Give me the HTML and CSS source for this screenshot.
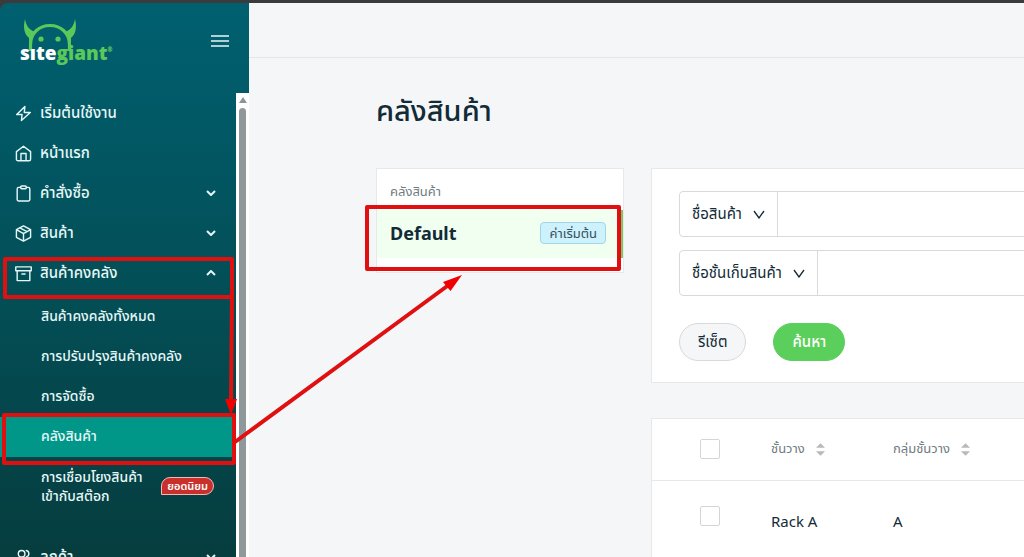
FILE: index.html
```
<!DOCTYPE html>
<html lang="th">
<head>
    <meta charset="UTF-8">
    <meta name="viewport" content="width=device-width, initial-scale=1.0">
    <title>คลังสินค้า</title>
    <link rel="stylesheet" href="styles.css">
</head>
<body>
    <div class="app">
        <aside class="sidebar">
            <div class="sidebar-header">
                <a href="#" class="logo" aria-label="sitegiant">
                    <svg class="logo-horns" width="54" height="32" viewBox="0 0 54 32">
                        <path d="M2 0C0 8 1 15 6 19L6 25L13 13C7 12 3 7 2 0ZM52 0C54 8 53 15 48 19L48 25L41 13C47 12 51 7 52 0Z" fill="#5bc85a"/>
                        <path d="M7.500 32V26C7.500 14 16 6.500 27 6.500S46.500 14 46.500 26V32" fill="none" stroke="#5bc85a" stroke-width="3.200"/>
                        <circle cx="18" cy="20" r="2.600" fill="#5bc85a"/>
                        <circle cx="35" cy="20" r="2.600" fill="#5bc85a"/>
                    </svg>
                    <span class="logo-text">sıte<b>giant</b><sup>®</sup></span>
                </a>
                <button type="button" class="menu-toggle" aria-label="เมนู">
                    <svg width="18" height="14" viewBox="0 0 18 14" stroke="currentColor" stroke-width="1.500"><path d="M0 2h18M0 7h18M0 12h18"/></svg>
                </button>
            </div>
            <div class="sidebar-body">
                <nav class="nav">
                    <a href="#" class="nav-item">
                        <svg class="icon" viewBox="0 0 18 18"><path d="M10.500 1.500 1.800 10h5.700L6.800 16.500 16.200 8h-6.400z"/></svg>
                        <span>เริ่มต้นใช้งาน</span>
                    </a>
                    <a href="#" class="nav-item">
                        <svg class="icon" viewBox="0 0 18 18"><path d="M1.500 7 9 1.300 16.500 7v8a1.700 1.700 0 0 1-1.700 1.700H3.200A1.700 1.700 0 0 1 1.500 15zM6.300 16.500V9h5.400v7.500"/></svg>
                        <span>หน้าแรก</span>
                    </a>
                    <a href="#" class="nav-item">
                        <svg class="icon" viewBox="0 0 18 18"><path d="M6 2.500H4A1.700 1.700 0 0 0 2.300 4.200v11A1.700 1.700 0 0 0 4 17h10a1.700 1.700 0 0 0 1.700-1.800v-11A1.700 1.700 0 0 0 14 2.500h-2"/><rect x="6" y="1" width="6" height="3" rx="1"/></svg>
                        <span>คำสั่งซื้อ</span>
                        <svg class="caret" viewBox="0 0 10 6"><path d="m1 1 4 4 4-4"/></svg>
                    </a>
                    <a href="#" class="nav-item">
                        <svg class="icon" viewBox="0 0 18 18"><path d="M9 1 16.500 5v8L9 17 1.500 13V5zM1.500 5 9 9l7.500-4M9 9v8M5.200 3l7.500 4"/></svg>
                        <span>สินค้า</span>
                        <svg class="caret" viewBox="0 0 10 6"><path d="m1 1 4 4 4-4"/></svg>
                    </a>
                    <a href="#" class="nav-item">
                        <svg class="icon" viewBox="0 0 18 18"><path d="M.8 2h16.400v4H.8zM2.300 6v10.500h13.400V6M7.300 9.500h3.400"/></svg>
                        <span>สินค้าคงคลัง</span>
                        <svg class="caret" viewBox="0 0 10 6"><path d="m1 5 4-4 4 4"/></svg>
                    </a>
                    <div class="subnav">
                        <a href="#" class="subnav-item">สินค้าคงคลังทั้งหมด</a>
                        <a href="#" class="subnav-item">การปรับปรุงสินค้าคงคลัง</a>
                        <a href="#" class="subnav-item">การจัดซื้อ</a>
                        <a href="#" class="subnav-item active">คลังสินค้า</a>
                        <a href="#" class="subnav-item two-line">
                            <span>การเชื่อมโยงสินค้า<br>เข้ากับสต๊อก</span>
                            <span class="hot">ยอดนิยม</span>
                        </a>
                    </div>
                    <a href="#" class="nav-item">
                        <svg class="icon" viewBox="0 0 18 18"><circle cx="7" cy="5" r="3.500"/><path d="M1 16v-2a3.500 3.500 0 0 1 3.500-3.500h5A3.500 3.500 0 0 1 13 14v2M12 1.600a3.500 3.500 0 0 1 0 6.800M14 10.700a3.500 3.500 0 0 1 3 3.300v2"/></svg>
                        <span>ลูกค้า</span>
                        <svg class="caret" viewBox="0 0 10 6"><path d="m1 1 4 4 4-4"/></svg>
                    </a>
                </nav>
                <div class="scrollbar">
                    <span class="scroll-up"></span>
                    <span class="scroll-thumb"></span>
                </div>
            </div>
        </aside>

        <div class="page">
            <header class="topbar"></header>
            <main class="content">
                <h1>คลังสินค้า</h1>
                <div class="columns">
                    <section class="card warehouses">
                        <h2>คลังสินค้า</h2>
                        <a href="#" class="warehouse">
                            <strong>Default</strong>
                            <span class="tag">ค่าเริ่มต้น</span>
                        </a>
                    </section>
                    <div class="details">
                        <form class="card filters">
                            <div class="field">
                                <select class="field-select" aria-label="ตัวกรองสินค้า">
                                    <option>ชื่อสินค้า</option>
                                </select>
                                <input type="text" aria-label="ชื่อสินค้า">
                            </div>
                            <div class="field">
                                <select class="field-select" aria-label="ตัวกรองชั้นเก็บ">
                                    <option>ชื่อชั้นเก็บสินค้า</option>
                                </select>
                                <input type="text" aria-label="ชื่อชั้นเก็บสินค้า">
                            </div>
                            <div class="buttons">
                                <button type="reset" class="btn">รีเซ็ต</button>
                                <button type="button" class="btn btn-primary">ค้นหา</button>
                            </div>
                        </form>
                        <div class="card">
                            <table class="racks">
                                <thead>
                                    <tr>
                                        <th class="check"><input type="checkbox" aria-label="เลือกทั้งหมด"></th>
                                        <th class="rack">ชั้นวาง <svg class="sort" viewBox="0 0 10 14"><path d="M5 0l5 5H0zM5 14l5-5H0z"/></svg></th>
                                        <th>กลุ่มชั้นวาง <svg class="sort" viewBox="0 0 10 14"><path d="M5 0l5 5H0zM5 14l5-5H0z"/></svg></th>
                                    </tr>
                                </thead>
                                <tbody>
                                    <tr>
                                        <td class="check"><input type="checkbox" aria-label="Rack A"></td>
                                        <td>Rack A</td>
                                        <td>A</td>
                                    </tr>
                                </tbody>
                            </table>
                        </div>
                    </div>
                </div>
            </main>
        </div>
    </div>

    <!-- walkthrough marks drawn over the page -->
    <svg class="marks" width="1024" height="557" viewBox="0 0 1024 557" aria-hidden="true">
        <g fill="none" stroke="#e01010" stroke-width="4" stroke-linejoin="round">
            <rect x="5" y="259" width="227" height="38"/>
            <rect x="4" y="415" width="230" height="48"/>
            <rect x="367" y="207" width="252" height="62"/>
            <path d="M232 296 231 404M235 442 450 284"/>
        </g>
        <path d="M225 399h12l-6 16zM462 275l-11.500 16-7.500-9z" fill="#f00000"/>
    </svg>
</body>
</html>
```

FILE: styles.css
```
* {
    box-sizing: border-box;
}
body {
    margin: 0;
    overflow: hidden;
    font-family: "Noto Sans", "Noto Sans Thai", "Open Sans", sans-serif;
    font-size: 15px;
    color: #122b36;
    background-color: #3b3b3b;
}
a {
    color: inherit;
    text-decoration: none;
}
button, input, select {
    font: inherit;
    color: inherit;
}
.app {
    display: flex;
    height: 100vh;
    padding-top: 3px;
}

/* sidebar */
.sidebar {
    flex: none;
    display: flex;
    flex-direction: column;
    width: 249px;
    border-top-left-radius: 8px;
    background: linear-gradient(#006070, #034f57 50%, #063d3f);
    color: #e6f7f7;
}
.sidebar-header {
    flex: none;
    display: flex;
    justify-content: space-between;
    align-items: flex-start;
    height: 90px;
    padding: 16px 20px 0;
}
.logo {
    display: flex;
    flex-direction: column;
}
.logo-horns {
    margin-left: 3px;
}
.logo-text {
    margin-top: -10px;
    font-family: "Open Sans", sans-serif;
    font-size: 19px;
    font-weight: 800;
    line-height: 24px;
    color: #fff;
}
.logo-text b {
    color: #5bc85a;
    font-weight: 800;
}
.logo-text sup {
    color: #5bc85a;
    font-size: 6px;
    vertical-align: 8px;
    line-height: 0;
}
.menu-toggle {
    display: flex;
    margin-top: 15px;
    padding: 0;
    border: none;
    background: none;
    cursor: pointer;
}
.sidebar-body {
    flex: 1;
    display: flex;
    min-height: 0;
}
.nav {
    flex: 1;
    overflow: hidden;
}
.nav-item {
    display: flex;
    align-items: center;
    gap: 8px;
    height: 40px;
    padding: 0 20px 0 15px;
    font-weight: 500;
}
.icon {
    width: 17px;
    height: 17px;
    fill: none;
    stroke: currentColor;
    stroke-width: 1.5;
    stroke-linejoin: round;
    stroke-linecap: round;
}
.caret {
    width: 10px;
    height: 6px;
    margin-left: auto;
    fill: none;
    stroke: currentColor;
    stroke-width: 2;
}
.subnav {
    padding: 4px 0 22px;
    font-size: 14px;
    font-weight: 500;
}
.subnav-item {
    display: flex;
    align-items: center;
    height: 40px;
    padding: 0 22px 2px 41px;
}
.subnav-item.active {
    background-color: #009688;
}
.subnav-item.two-line {
    justify-content: space-between;
    height: 58px;
    padding-bottom: 0;
    line-height: 19px;
    white-space: nowrap;
}
.hot {
    padding: 0 5px;
    border: 1px solid #f3b9b4;
    border-radius: 9px 9px 9px 0;
    background-color: #c9302c;
    color: #fff;
    font-size: 11px;
    font-weight: 600;
    line-height: 16px;
}
.scrollbar {
    display: flex;
    flex-direction: column;
    align-items: center;
    gap: 5px;
    width: 13px;
    padding-top: 4px;
    background-color: #fff;
}
.scroll-up {
    border: 4px solid transparent;
    border-top: none;
    border-bottom: 6px solid #8b9598;
}
.scroll-thumb {
    flex: 1;
    width: 7px;
    border-radius: 4px 4px 0 0;
    background-color: #8f999c;
}

/* page */
.page {
    flex: 1;
    min-width: 0;
    overflow: hidden;
    background-color: #f4f6f8;
}
.topbar {
    height: 55px;
    border-bottom: 1px solid #e3e6e8;
}
.content {
    padding: 32px 0 0 127px;
}
h1 {
    margin: 0;
    font-size: 29px;
    font-weight: 500;
    line-height: 40px;
}
.columns {
    display: grid;
    grid-template-columns: 248px minmax(640px, 1fr);
    align-items: start;
    gap: 27px;
    margin-top: 38px;
}
.card {
    border: 1px solid #e6e8ea;
    background-color: #fff;
}
.warehouses {
    padding-bottom: 14px;
}
.warehouses h2 {
    margin: 0;
    padding: 12px 13px 9px;
    color: #6f7b80;
    font-size: 13px;
    font-weight: 400;
    line-height: 20px;
}
.warehouse {
    display: flex;
    justify-content: space-between;
    align-items: center;
    height: 48px;
    padding: 0 13px 2px;
    border-right: 4px solid #7fc765;
    background-color: #f1fff1;
}
.warehouse strong {
    font-size: 18px;
}
.tag {
    padding: 0 8px;
    border: 1px solid #a3d5e8;
    border-radius: 4px;
    background-color: #cdf1fd;
    color: #34505a;
    font-size: 13px;
    line-height: 20px;
}
.details {
    display: flex;
    flex-direction: column;
    gap: 35px;
}
.filters {
    display: flex;
    flex-direction: column;
    gap: 13px;
    padding: 22px 27px 21px;
}
.field {
    display: flex;
    height: 46px;
    border: 1px solid #d6dadc;
    border-radius: 4px;
}
.field-select {
    padding: 0 35px 2px 12px;
    appearance: none;
    border: none;
    border-right: 1px solid #d6dadc;
    background: url("data:image/svg+xml,%3Csvg xmlns='http://www.w3.org/2000/svg' width='12' height='9' fill='none' stroke='%23122b36' stroke-width='1.3'%3E%3Cpath d='m1 1 5 7 5-7'/%3E%3C/svg%3E") no-repeat right 12px center;
}
.field input {
    flex: 1;
    min-width: 0;
    padding: 0 12px;
    border: none;
    background: none;
}
.buttons {
    display: flex;
    gap: 27px;
    margin-top: 14px;
}
.btn {
    height: 38px;
    padding: 0 18px;
    border: 1px solid #d6dadc;
    border-radius: 19px;
    background-color: #f4f6f8;
    cursor: pointer;
}
.btn-primary {
    border-color: #5bcf5b;
    background-color: #5bcf5b;
    color: #fff;
    font-weight: 500;
}
.racks {
    width: 100%;
    border-collapse: collapse;
    text-align: left;
}
.racks th {
    height: 61px;
    padding: 0;
    border-bottom: 1px solid #e6e8ea;
    color: #6f7b80;
    font-size: 13px;
    font-weight: 400;
}
.racks td {
    height: 82px;
    padding: 0;
    font-size: 15px;
}
.racks .check {
    width: 119px;
    padding-left: 48px;
}
.racks .rack {
    width: 122px;
}
.racks td.check {
    padding-bottom: 10px;
}
.check input {
    display: block;
    width: 20px;
    height: 20px;
    margin: 0;
    appearance: none;
    border: 1px solid #d3d6d8;
    border-radius: 2px;
    background-color: #fff;
}
.sort {
    width: 9px;
    height: 13px;
    margin-left: 8px;
    vertical-align: middle;
    fill: #b5babd;
}
.marks {
    position: absolute;
    top: 0;
    left: 0;
    pointer-events: none;
}
```
